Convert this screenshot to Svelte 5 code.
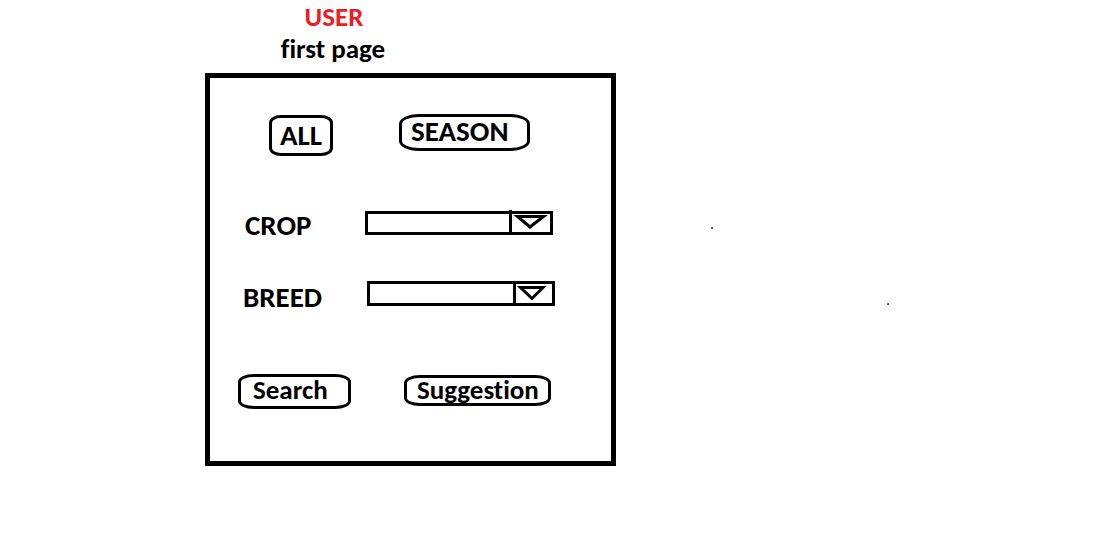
<script>
  let crop = $state('');
  let breed = $state('');
</script>

<main class="page">
  <section class="screen">
    <header class="heading">
      <h1>USER</h1>
      <h2>first page</h2>
    </header>

    <form class="panel" onsubmit={(e) => e.preventDefault()}>
      <div class="row filters">
        <button type="button" class="all">ALL</button>
        <button type="button" class="season">SEASON</button>
      </div>

      <div class="row field">
        <label for="crop">CROP</label>
        <div class="picker">
          <select id="crop" bind:value={crop}><option value=""></option></select>
          <svg width="44" height="25" viewBox="0 0 44 25" aria-hidden="true">
            <path d="M1.5 0V25" />
            <path d="M8.5 6.5H34.5L21 17Z" />
          </svg>
        </div>
      </div>

      <div class="row field breed">
        <label for="breed">BREED</label>
        <div class="picker">
          <select id="breed" bind:value={breed}><option value=""></option></select>
          <svg width="42" height="25" viewBox="0 0 42 25" aria-hidden="true">
            <path d="M1.5 0V25" />
            <path d="M7.5 6.5H30L19 17.5Z" />
          </svg>
        </div>
      </div>

      <div class="row actions">
        <button type="submit" class="search">Search</button>
        <button type="button" class="suggestion">Suggestion</button>
      </div>
    </form>
  </section>
  <i class="speck near"></i>
  <i class="speck far"></i>
</main>

<style>
  :global(body) {
    margin: 0;
    background: #fff;
  }

  .page {
    position: relative;
    display: grid;
    grid-template-columns: 205fr minmax(411px, 411fr) 481fr;
    color: #000;
    font: 700 27px/32px Carlito, Lato, sans-serif;
    font-variant-ligatures: none;
  }

  .screen {
    grid-column: 2;
  }

  .heading {
    padding: 1px 0 8px 75px;
    width: 106px;
    text-align: center;
    white-space: nowrap;
  }

  h1,
  h2 {
    margin: 0;
    font-size: inherit;
    font-weight: inherit;
  }

  h1 {
    padding-left: 2px;
    color: #ed1c24;
  }

  .panel {
    box-sizing: border-box;
    padding: 36px 28px 52px;
    border: 5px solid #000;
  }

  .row {
    display: flex;
    align-items: flex-start;
  }

  button {
    box-sizing: border-box;
    padding: 0;
    border: 3px solid #000;
    border-radius: 16px / 8px;
    background: none;
    color: inherit;
    font-family: inherit;
    font-size: inherit;
    font-weight: inherit;
    font-variant-ligatures: none;
    line-height: 24px;
    text-align: left;
    white-space: nowrap;
  }

  .filters {
    gap: 66px;
    padding-left: 31px;
    font-size: 29px;
  }

  .all {
    width: 64px;
    height: 41px;
    margin-top: 1px;
    padding-bottom: 2px;
    border-radius: 12px / 8px;
    text-align: center;
  }

  .season {
    width: 131px;
    height: 37px;
    padding: 0 0 4px 9px;
    border-radius: 20px / 10px;
  }

  .field {
    padding: 54px 0 0 7px;
    font-size: 29px;
  }

  .breed {
    padding: 40px 0 0 5px;
  }

  label {
    flex: 0 0 120px;
    padding-bottom: 2px;
    line-height: 30px;
  }

  .breed label {
    flex-basis: 124px;
  }

  .picker {
    display: grid;
    grid-template-columns: 188px;
    justify-items: end;
    align-items: end;
  }

  .breed .picker {
    margin-top: -1px;
  }

  .picker select,
  .picker svg {
    grid-area: 1 / 1;
  }

  select {
    box-sizing: border-box;
    width: 100%;
    height: 24px;
    border: 3px solid #000;
    border-radius: 0;
    background: #fff;
    appearance: none;
    font: inherit;
  }

  .breed select {
    height: 25px;
  }

  svg {
    fill: none;
    stroke: #000;
    stroke-width: 3;
    pointer-events: none;
  }

  .actions {
    gap: 53px;
    padding-top: 60px;
  }

  .search {
    width: 113px;
    height: 35px;
    padding: 0 0 4px 12px;
  }

  .suggestion {
    width: 147px;
    height: 31px;
    margin-top: 1px;
    padding: 0 0 1px 10px;
  }

  .speck {
    position: absolute;
    width: 2px;
    height: 2px;
    background: linear-gradient(135deg, #999, #222);
  }

  .near {
    left: 711px;
    top: 227px;
  }

  .far {
    left: 887px;
    top: 303px;
  }
</style>
